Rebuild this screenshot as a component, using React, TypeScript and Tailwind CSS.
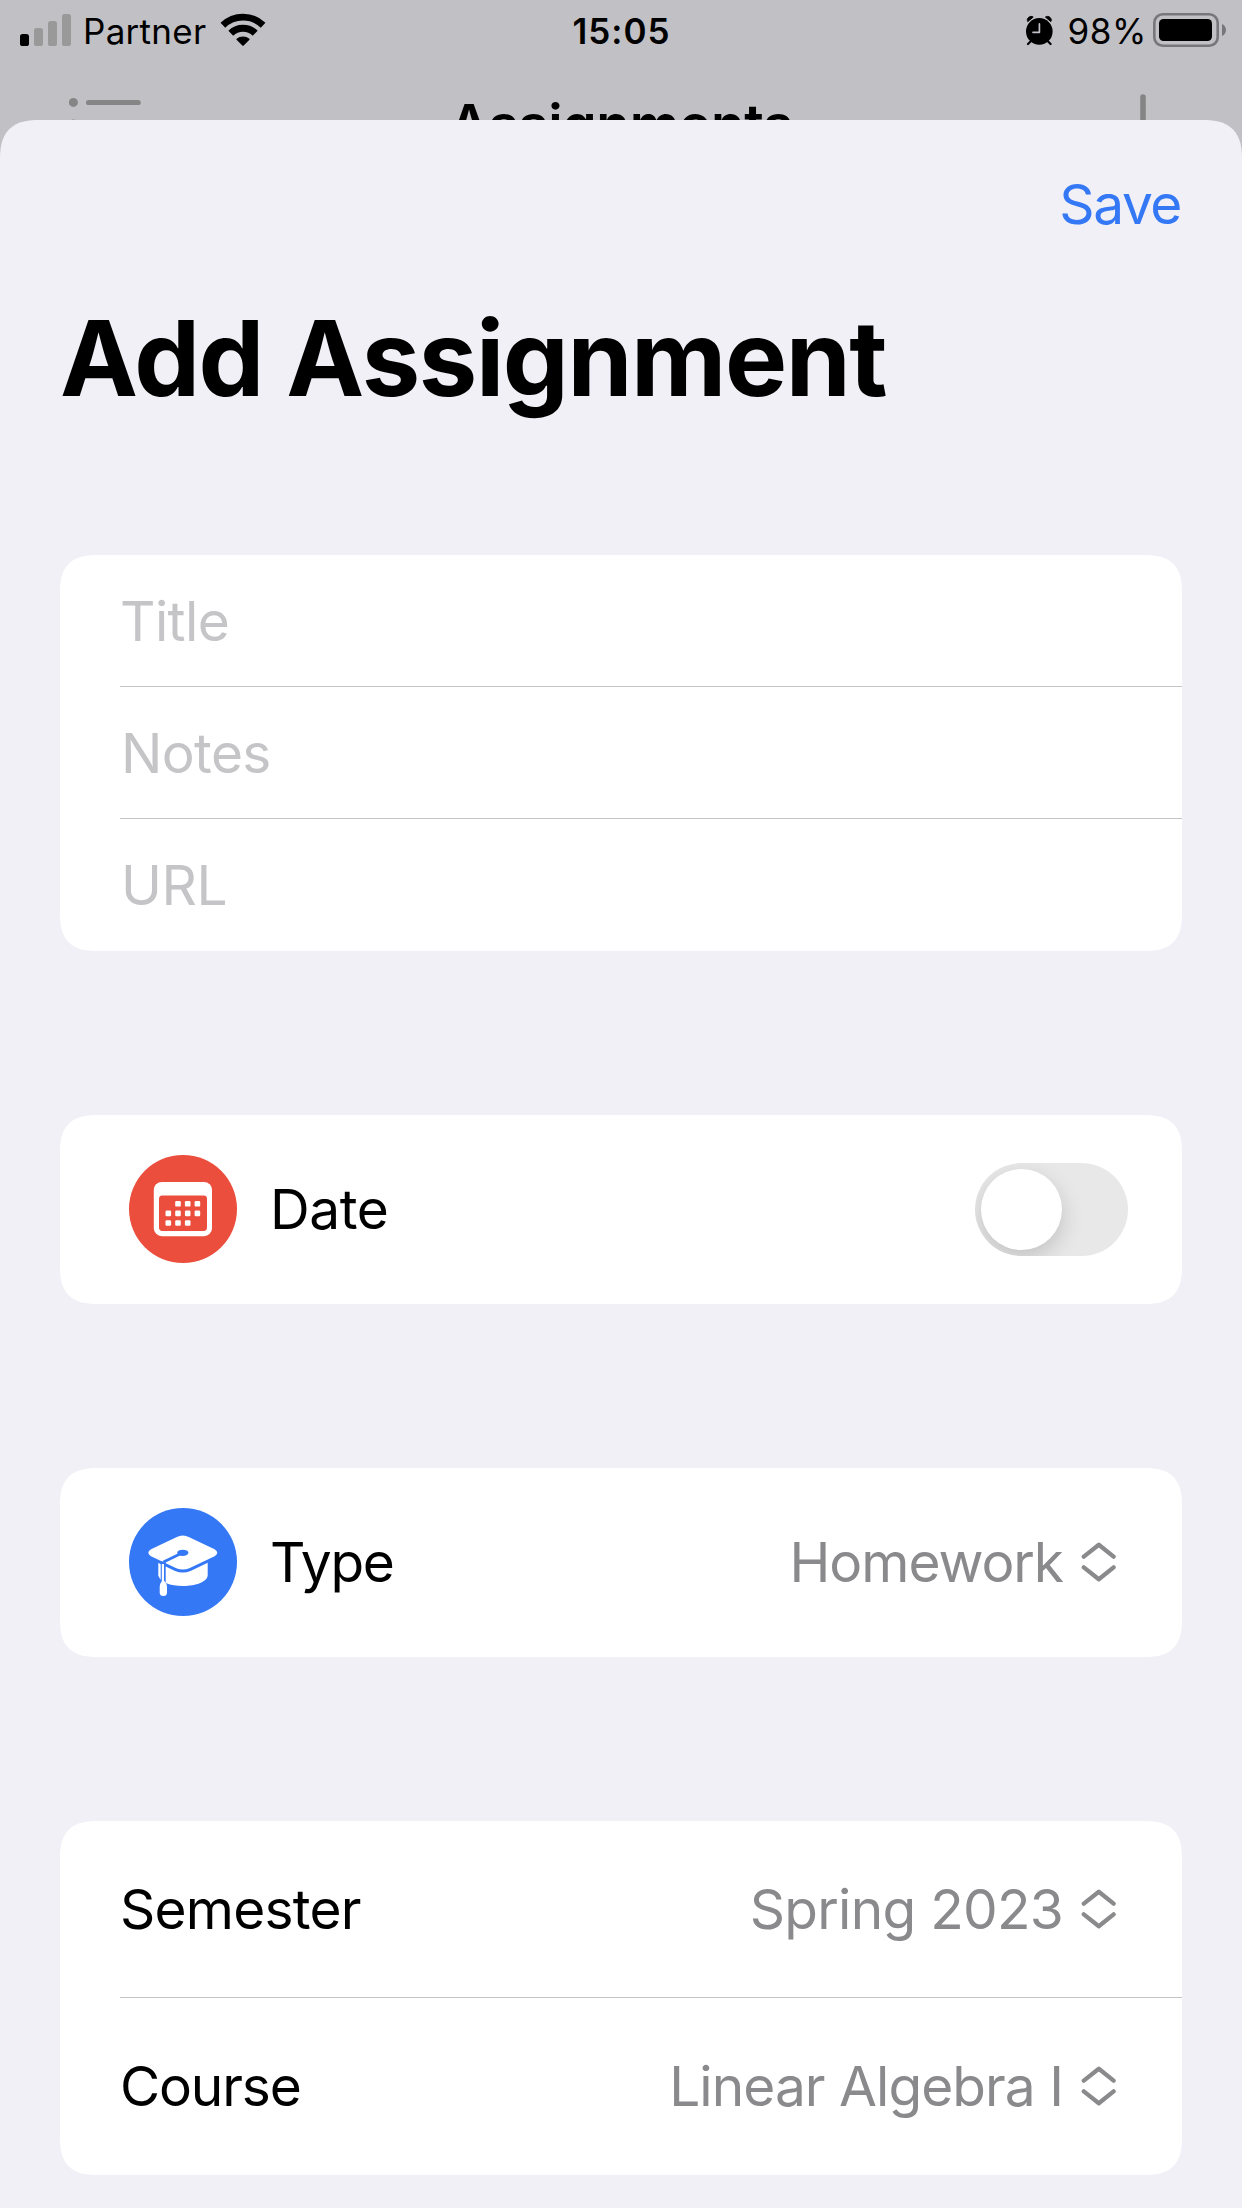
import type { ReactNode } from "react";

function SignalBars() {
  return (
    <svg width="51" height="62" viewBox="20 0 51 62">
      <rect x="20" y="34" width="9" height="12" rx="2.6" fill="#000" />
      <rect x="34" y="28" width="9" height="18" rx="2.6" fill="#999999" />
      <rect x="48" y="21" width="9" height="25" rx="2.6" fill="#999999" />
      <rect x="62" y="14" width="9" height="32" rx="2.6" fill="#999999" />
    </svg>
  );
}

function WifiIcon() {
  return (
    <svg width="46" height="62" viewBox="220 0 46 62">
      <g fill="none" stroke="#000">
        <path d="M222.9 25.2A29 29 0 0 1 263.1 25.2" strokeWidth="6.8" />
        <path d="M230.8 33.2A17.6 17.6 0 0 1 255.2 33.2" strokeWidth="7" />
      </g>
      <path
        d="M237 39.3A9 9 0 0 1 249 39.3L243 45.2Z"
        stroke="#000"
        strokeWidth="1.2"
        strokeLinejoin="round"
      />
    </svg>
  );
}

function AlarmIcon() {
  return (
    <svg width="27" height="62" viewBox="1026 0 27 62">
      <circle cx="1039.3" cy="31.4" r="13.3" />
      <path
        d="M1027.8 21.6C1025.8 18.6 1030.2 14.8 1033.2 17.1ZM1050.8 21.6C1052.8 18.6 1048.4 14.8 1045.4 17.1Z"
        stroke="#000"
        strokeWidth="1"
        strokeLinejoin="round"
      />
      <path
        d="M1031.5 40.5L1028 44M1047.1 40.5L1050.6 44"
        stroke="#000"
        strokeWidth="2.2"
        strokeLinecap="round"
      />
      <path
        d="M1039.4 23.9V32.3H1033"
        fill="none"
        stroke="#c1c0c5"
        strokeWidth="1.7"
        strokeLinecap="round"
        strokeLinejoin="round"
      />
    </svg>
  );
}

function BatteryIcon() {
  return (
    <svg width="73" height="62" viewBox="1153 0 73 62">
      <rect
        x="1154.3"
        y="14.3"
        width="63.4"
        height="31.4"
        rx="8.5"
        fill="none"
        stroke="#77767a"
        strokeWidth="2.6"
      />
      <rect x="1159" y="19" width="53" height="22" rx="4.5" />
      <path d="M1222 24C1227.3 26 1227.3 34 1222 36Z" fill="#77767a" />
    </svg>
  );
}

function CalendarIcon() {
  const dots = [
    [1, 0], [2, 0], [3, 0],
    [0, 1], [1, 1], [2, 1], [3, 1],
    [0, 2], [1, 2], [2, 2],
  ];
  return (
    <svg width="108" height="108" viewBox="0 0 108 108">
      <circle cx="54" cy="54" r="54" fill="#eb4e3d" />
      <rect x="24.8" y="27" width="58.2" height="54.2" rx="8" fill="#fff" />
      <rect x="30" y="40.6" width="48" height="35.4" rx="3.4" fill="#eb4e3d" />
      {dots.map(([c, r]) => (
        <rect
          key={`${c}-${r}`}
          x={36.5 + c * 9.7}
          y={46 + r * 9.6}
          width="5.6"
          height="5.6"
          rx="1.2"
          fill="#fff"
        />
      ))}
    </svg>
  );
}

function GraduationCapIcon() {
  return (
    <svg width="108" height="108" viewBox="0 0 108 108">
      <circle cx="54" cy="54" r="54" fill="#3478f6" />
      <path
        d="M29.3 53V67.5C31 74 41 78 54 78C67 78 78.7 73.5 78.7 67V53Z"
        fill="#fff"
      />
      <path
        d="M47.3 29.2Q53.8 26 60.3 29.2L85.6 41.2Q91 44.7 85.6 48.2L60.3 60.2Q53.8 63 47.3 60.2L22 48.2Q16.6 44.7 22 41.2Z"
        fill="#fff"
        stroke="#3478f6"
        strokeWidth="6"
        paintOrder="stroke"
      />
      <ellipse cx="53.8" cy="44.8" rx="5.6" ry="3.1" fill="#3478f6" />
      <path
        d="M52 45.5L34.5 54"
        fill="none"
        stroke="#3478f6"
        strokeWidth="2.8"
      />
      <path d="M34.2 53.5V76" stroke="#3478f6" strokeWidth="5" />
      <path d="M33.9 56V75" stroke="#fff" strokeWidth="2.2" />
      <path
        d="M34.3 71.8C36.5 74 38 76 38 79V84.5Q38 88 34.4 88Q30.7 88 30.7 84.5V79C30.7 76 32 74 34.3 71.8Z"
        fill="#fff"
      />
    </svg>
  );
}

function UpDownChevrons() {
  return (
    <svg width="36" height="42" viewBox="0 0 36 42" className="shrink-0">
      <path
        d="M2.8 15.6L17.8 3.8L32.6 15.6M2.8 26.4L17.8 38.2L32.6 26.4"
        fill="none"
        stroke="#8a8a8d"
        strokeWidth="4.3"
        strokeLinecap="round"
        strokeLinejoin="round"
      />
    </svg>
  );
}

function Card({ children, className }: { children: ReactNode; className: string }) {
  return (
    <section
      className={`overflow-hidden rounded-[38px] bg-white [corner-shape:superellipse(1.4)] ${className}`}
    >
      {children}
    </section>
  );
}

function Divider() {
  return <div className="ml-[60px] h-px bg-[#c5c5c7]" />;
}

function Field({ label, className }: { label: string; className: string }) {
  return (
    <div className={`flex h-[131px] items-center text-[#c5c5c7] ${className}`}>
      {label}
    </div>
  );
}

function PickerValue({ value, className }: { value: string; className: string }) {
  return (
    <div className="flex items-center gap-[18px] pr-[65px] text-[#8a8a8d]">
      <span className={className}>{value}</span>
      <UpDownChevrons />
    </div>
  );
}

export default function App() {
  return (
    <div className="flex h-[2208px] w-[1242px] flex-col overflow-hidden bg-[#c1c0c5] font-[Inter,sans-serif] text-black">
      <header className="flex h-[62px] shrink-0 items-center text-[35px] leading-[42px]">
        <div className="flex flex-1 items-center pl-5">
          <SignalBars />
          <span className="ml-3 mr-[14px] tracking-[0.29px]">Partner</span>
          <WifiIcon />
        </div>
        <span className="mr-[3px] font-semibold tracking-[1px]">15:05</span>
        <div className="flex flex-1 items-center justify-end pr-4">
          <AlarmIcon />
          <span className="ml-[14px] mr-[6px] tracking-[0.6px]">98%</span>
          <BatteryIcon />
        </div>
      </header>

      <div className="h-[58px] shrink-0 overflow-hidden">
        <div className="flex h-[124px] items-center justify-between px-[69px]">
          <svg width="72" height="62" viewBox="0 0 72 62">
            <g fill="#858585">
              <circle cx="4.4" cy="9.4" r="4.5" />
              <rect x="17" y="6.9" width="54.8" height="5.2" rx="2.6" />
              <circle cx="4.4" cy="31" r="4.5" />
              <rect x="17" y="28.4" width="54.8" height="5.2" rx="2.6" />
            </g>
          </svg>
          <span className="text-[55px] font-semibold leading-[66px] tracking-[-0.35px]">
            Assignments
          </span>
          <div className="flex w-[72px] justify-end">
            <svg width="60" height="60" viewBox="0 0 60 60">
              <path
                d="M30 3V57M3 30H57"
                stroke="#858585"
                strokeWidth="5.6"
                strokeLinecap="round"
              />
            </svg>
          </div>
        </div>
      </div>

      <main className="flex grow flex-col rounded-t-[40px] bg-[#f1f0f6] px-[60px] text-[55px] leading-[66px] [corner-shape:superellipse(1.4)]">
        <div className="flex h-[168px] items-center justify-end">
          <button className="mr-px tracking-[-1.4px] text-[#3478f6]">Save</button>
        </div>
        <h1 className="flex h-[140px] items-center text-[104.5px] font-bold leading-[126px] tracking-[-1.44px]">
          Add Assignment
        </h1>

        <Card className="mt-[127px] h-[396px]">
          <Field label="Title" className="pl-[60px] tracking-[-0.6px]" />
          <Divider />
          <Field label="Notes" className="pl-[61px] tracking-[-0.65px]" />
          <Divider />
          <Field label="URL" className="pl-[61px] tracking-[-0.4px]" />
        </Card>

        <Card className="mt-[164px] flex h-[189px] items-center pb-px pl-[69px] pr-[54px]">
          <CalendarIcon />
          <span className="ml-[33px] tracking-[-0.4px]">Date</span>
          <div className="ml-auto flex h-[93px] w-[153px] items-center overflow-hidden rounded-full bg-[#e8e8e8] pl-1.5">
            <div className="size-[81px] rounded-full bg-white shadow-[0_8px_22px_rgba(0,0,0,0.17)]" />
          </div>
        </Card>

        <Card className="mt-[164px] flex h-[189px] items-center justify-between pb-px pl-[69px]">
          <div className="flex items-center">
            <GraduationCapIcon />
            <span className="ml-[33px] tracking-[-1.3px]">Type</span>
          </div>
          <PickerValue value="Homework" className="tracking-[-1.05px]" />
        </Card>

        <Card className="mt-[164px] h-[354px]">
          <div className="flex h-[176px] items-center justify-between pl-[60px]">
            <span className="tracking-[-0.78px]">Semester</span>
            <PickerValue value="Spring 2023" className="tracking-[-0.73px]" />
          </div>
          <Divider />
          <div className="flex h-[176px] items-center justify-between pl-[60px]">
            <span className="tracking-[-1.15px]">Course</span>
            <PickerValue value="Linear Algebra I" className="tracking-[-0.96px]" />
          </div>
        </Card>
      </main>
    </div>
  );
}
